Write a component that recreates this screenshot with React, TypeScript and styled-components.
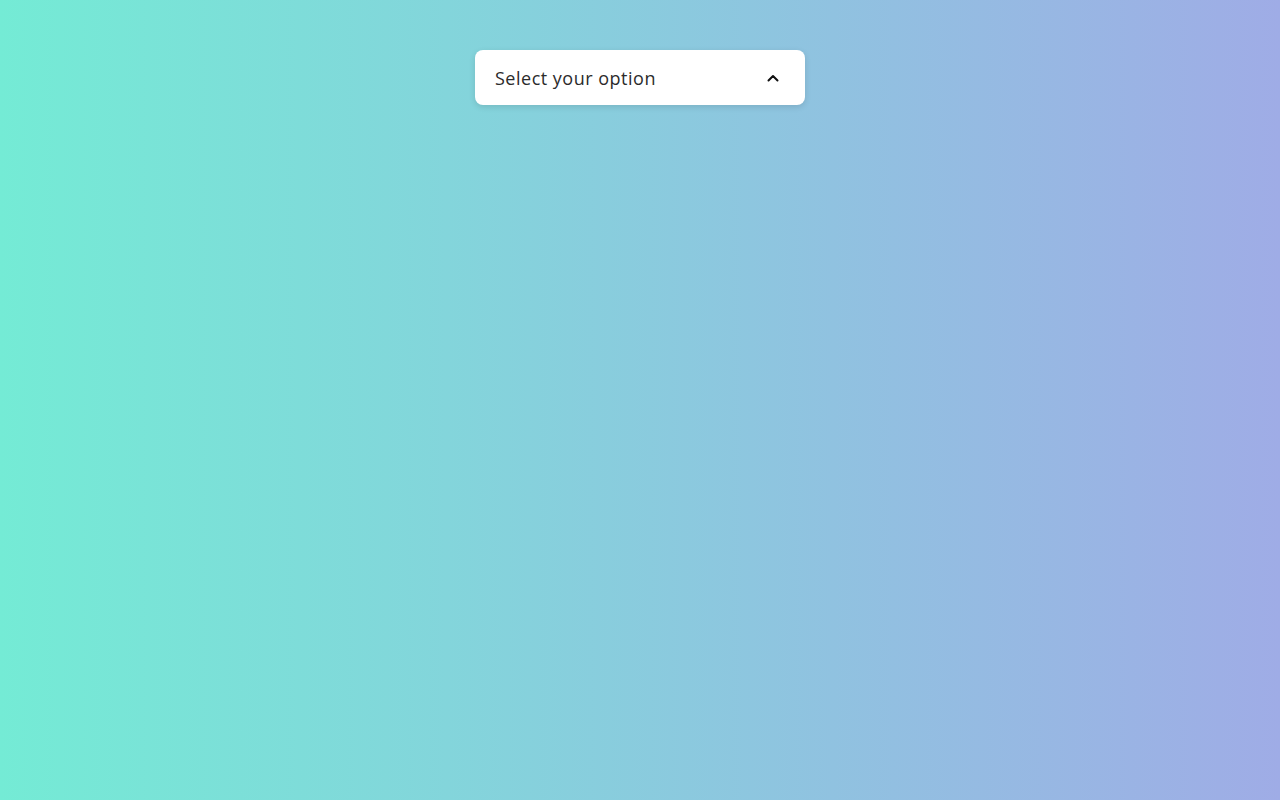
import React, { useState } from 'react'
import styled, { createGlobalStyle } from 'styled-components'

const GlobalStyle = createGlobalStyle`
  html, body {
    margin: 0;
    padding: 0;
    height: 100%;
  }
  body {
    font-family: 'Inter', 'Open Sans', sans-serif;
  }
  #root {
    height: 100%;
  }
`

const Page = styled.div`
  min-height: 100vh;
  box-sizing: border-box;
  padding-top: 50px;
  display: flex;
  justify-content: center;
  align-items: flex-start;
  background: linear-gradient(to right, #74ebd5, #9face6);
`

const SelectBox = styled.button`
  width: 330px;
  height: 55px;
  box-sizing: border-box;
  padding: 1px 20px 0;
  display: flex;
  align-items: center;
  justify-content: space-between;
  background: #fff;
  border: none;
  border-radius: 8px;
  box-shadow: 0 2px 6px rgba(0, 0, 0, 0.12);
  cursor: pointer;
`

const Label = styled.span`
  font-family: 'Open Sans', 'Inter', sans-serif;
  font-size: 18px;
  color: #2b2b2b;
  letter-spacing: 0.5px;
`

const Chevron = styled.svg<{ open: boolean }>`
  width: 14px;
  height: 14px;
  margin-right: 5px;
  transform: rotate(${({ open }) => (open ? '0deg' : '180deg')});
`

const App: React.FC = () => {
  const [open, setOpen] = useState(true)
  return (
    <>
      <GlobalStyle />
      <Page>
        <SelectBox onClick={() => setOpen(o => !o)}>
          <Label>Select your option</Label>
          <Chevron open={open} viewBox='0 0 14 14' fill='none'>
            <path
              d='M2.5 9.5 L7 5 L11.5 9.5'
              stroke='#111'
              strokeWidth='2'
              strokeLinecap='round'
              strokeLinejoin='round'
            />
          </Chevron>
        </SelectBox>
      </Page>
    </>
  )
}

export default App
